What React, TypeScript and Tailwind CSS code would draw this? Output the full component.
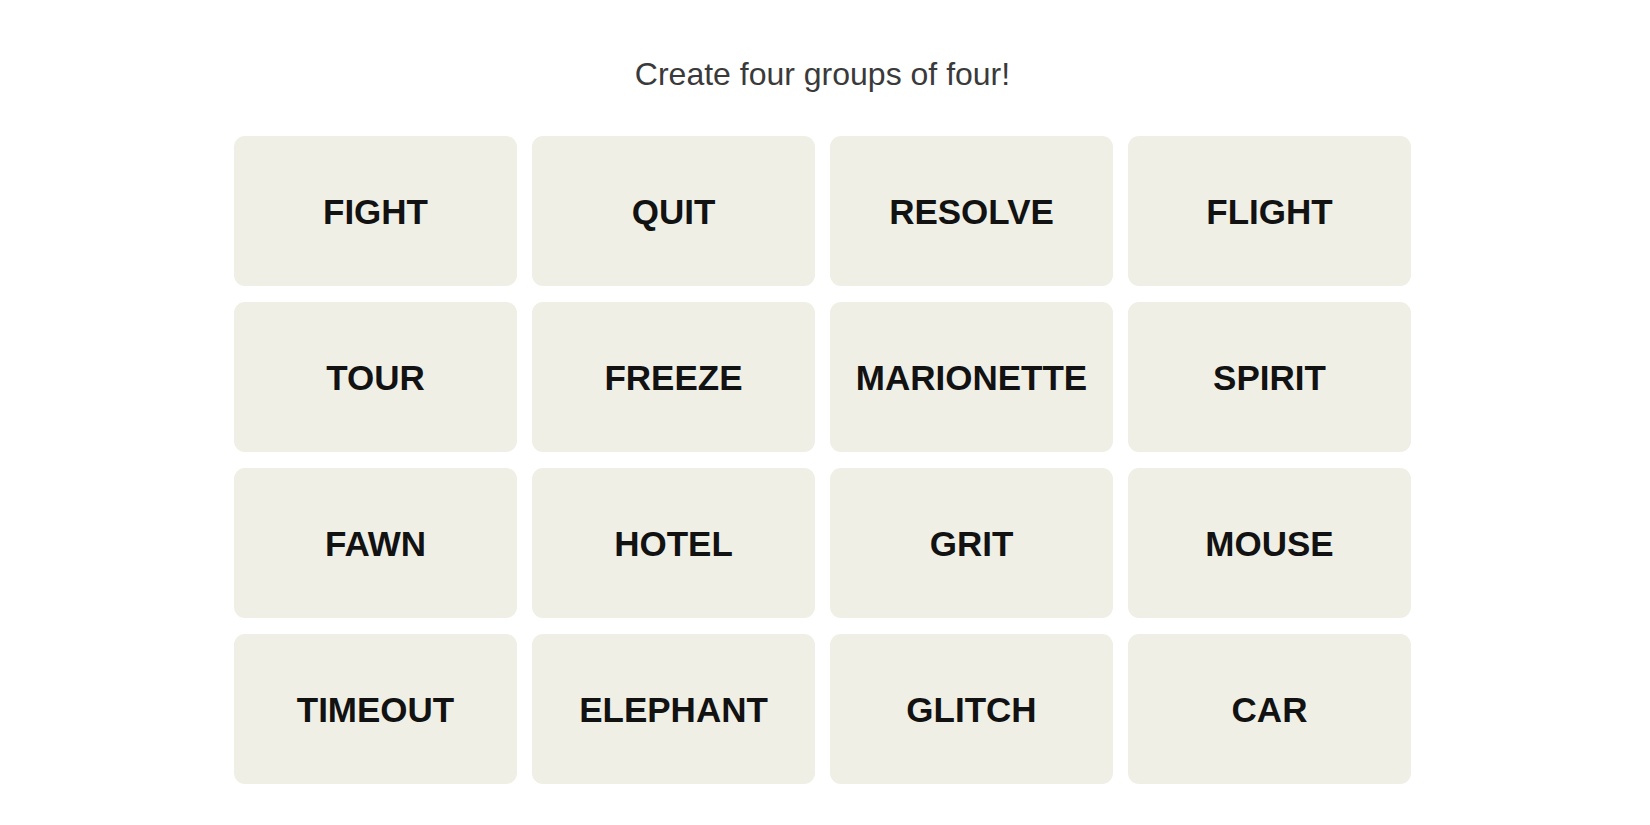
import React from "react";

const words = [
  "FIGHT", "QUIT", "RESOLVE", "FLIGHT",
  "TOUR", "FREEZE", "MARIONETTE", "SPIRIT",
  "FAWN", "HOTEL", "GRIT", "MOUSE",
  "TIMEOUT", "ELEPHANT", "GLITCH", "CAR",
];

export default function App() {
  return (
    <div className="w-[1650px] h-[825px] bg-white overflow-hidden" style={{ fontFamily: '"Liberation Sans", Arial, sans-serif' }}>
      <div className="w-[1645px] flex flex-col items-center pt-[55px]">
        <p className="text-[32px] leading-[38px] text-[#3a3a3a]">Create four groups of four!</p>
        <div className="mt-[43px] grid grid-cols-[repeat(4,283px)] gap-x-[15px] gap-y-[16px]">
          {words.map((w) => (
            <div key={w} className="h-[150px] rounded-[11px] bg-[#efefe6] flex items-center justify-center">
              <span className="text-[35px] font-bold text-[#121212] leading-none">{w}</span>
            </div>
          ))}
        </div>
      </div>
    </div>
  );
}
